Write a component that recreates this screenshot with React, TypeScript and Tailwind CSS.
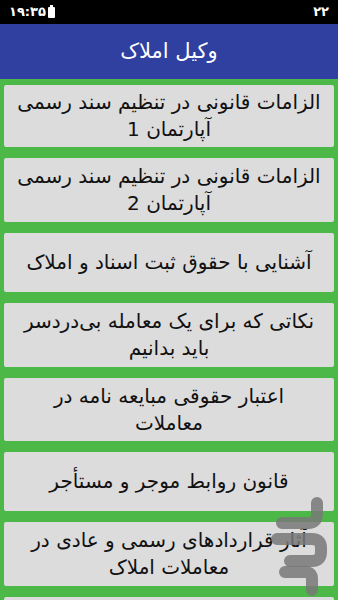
import React from 'react';

const items = [
  { lines: ['الزامات قانونی در تنظیم سند رسمی', 'آپارتمان 1'], h: 'h-[62px]' },
  { lines: ['الزامات قانونی در تنظیم سند رسمی', 'آپارتمان 2'], h: 'h-[64px]' },
  { lines: ['آشنایی با حقوق ثبت اسناد و املاک'], h: 'h-[59px]' },
  { lines: ['نکاتی که برای یک معامله بی‌دردسر', 'باید بدانیم'], h: 'h-[64px]' },
  { lines: ['اعتبار حقوقی مبایعه نامه در', 'معاملات'], h: 'h-[63px]' },
  { lines: ['قانون روابط موجر و مستأجر'], h: 'h-[59px]' },
  { lines: ['آثار قراردادهای رسمی و عادی در', 'معاملات املاک'], h: 'h-[64px]' },
  { lines: [], h: 'h-[59px]' },
];

const Watermark: React.FC = () => (
  <svg className="absolute left-[268px] top-[494px] pointer-events-none" width="62" height="104" viewBox="268 494 62 104">
    <g fill="none" stroke="rgba(120,120,120,0.85)" strokeWidth="12" strokeLinecap="round" strokeLinejoin="round">
      <path d="M317 503 L317 514 Q317 523 308 523 L282 523" />
      <path d="M277 539 L312 539 Q321 539 321 548 L321 552 Q321 561 312 561 L290 561" />
      <path d="M285 572 L305 572 Q312 572 312 579 L312 590" />
    </g>
  </svg>
);

export default function App() {
  return (
    <div className="relative w-[338px] h-[600px] overflow-hidden bg-[#4cb848]" style={{ fontFamily: '"DejaVu Sans", sans-serif' }}>
      {/* status bar */}
      <div className="h-[24px] bg-black flex items-center justify-between px-[9px] text-white text-[13px] font-bold">
        <div className="flex items-center gap-[2px]">
          <span>۱۹:۳۵</span>
          <div className="relative w-[7px] h-[11px] bg-white rounded-[1px]">
            <div className="absolute -top-[2px] left-[2px] w-[3px] h-[2px] bg-white" />
          </div>
        </div>
        <span>۲۲</span>
      </div>

      {/* header */}
      <div className="h-[55px] bg-[#3040a0] flex items-center justify-center">
        <h1 dir="rtl" className="text-white text-[21px]">وکیل املاک</h1>
      </div>

      {/* list */}
      <div className="flex flex-col gap-[11px] px-[4px] pt-[6px]">
        {items.map((it, i) => (
          <div key={i} dir="rtl" className={`${it.h} shrink-0 bg-[#dcdcdc] rounded-[2px] flex flex-col items-center justify-center text-[#111] text-[20px] leading-[27px] text-center`}>
            {it.lines.map((l, j) => (
              <span key={j} className="whitespace-nowrap">{l}</span>
            ))}
          </div>
        ))}
      </div>

      <Watermark />
    </div>
  );
}
